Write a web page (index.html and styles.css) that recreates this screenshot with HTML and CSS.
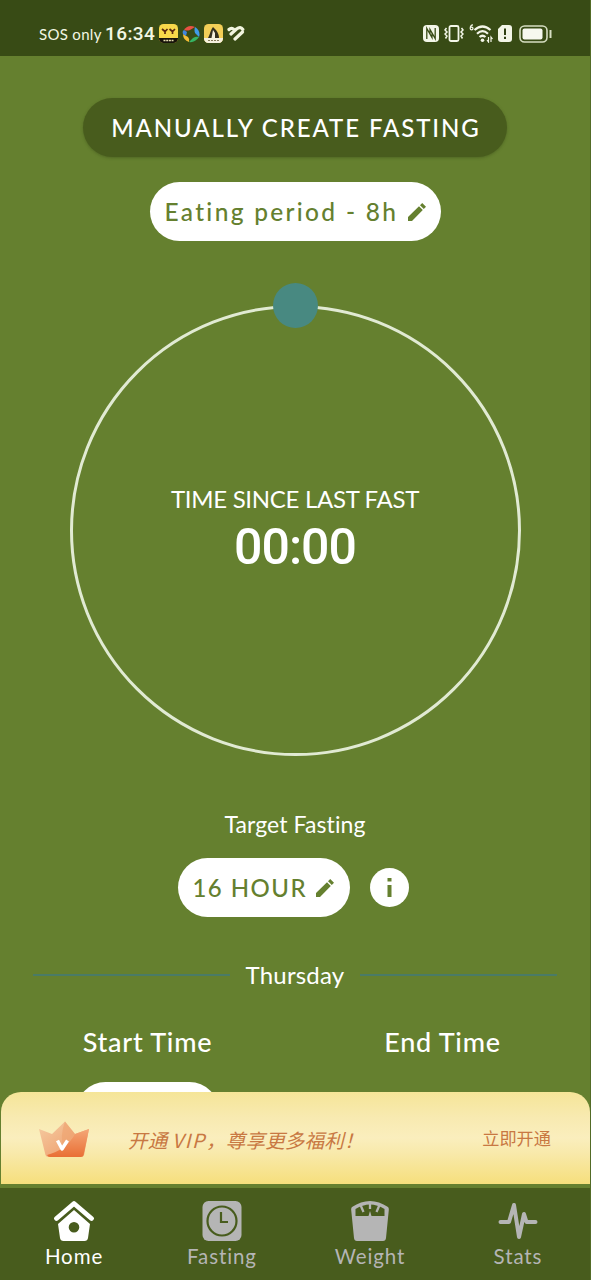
FILE: index.html
```html
<!DOCTYPE html>
<html lang="en">
<head>
<meta charset="utf-8">
<title>Fasting tracker</title>
<link rel="stylesheet" href="styles.css">
</head>
<body>
<div class="screen">
  <header class="status">
    <div class="status-left">
      <span class="carrier">SOS only</span>
      <span class="clock">16:34</span>
      <svg class="app" width="19" height="19" viewBox="0 0 19 19"><rect width="19" height="19" rx="4.5" fill="#f8d94a"/><path d="M0 14h19v.5a4.500 4.500 0 0 1-4.500 4.500h-10A4.500 4.500 0 0 1 0 14.500z" fill="#17130b"/><path d="M3 5l3 2.500L8.500 5M6 7.500V10M10.500 5l3 2.500L16 5M13.500 7.500V10" stroke="#5a2a10" stroke-width="1.700" fill="none"/><path d="M4.500 16.500h10" stroke="#e8dfb0" stroke-width="1.300" stroke-dasharray="2 .7"/></svg>
      <svg class="app" width="18" height="18" viewBox="0 0 18 18"><path d="M2 5Q6-1 13 2L8 5Q5 6 2 5z" fill="#e95143"/><path d="M13 2Q19 6 17 12L13 8Q12 5 13 2z" fill="#3f9be8"/><path d="M17 12Q13 18 7 17L11 13Q14 11 17 12z" fill="#36b563"/><path d="M7 17Q1 15 1 9L6 12Q8 14 7 17z" fill="#f4bd35"/><path d="M1 9Q0 6 2 5L5 7 4 11z" fill="#4286df"/></svg>
      <svg class="app" width="19" height="19" viewBox="0 0 19 19"><rect width="19" height="19" rx="4.500" fill="#f3cf57"/><path d="M4 14C6 11 6 7 9 3l3 3c2 3 3 5 3 8z" fill="#35301f"/><path d="M9 6l2 3v5H7.500z" fill="#f5efdc"/><path d="M0 14h19v.5a4.500 4.500 0 0 1-4.500 4.500h-10A4.500 4.500 0 0 1 0 14.500z" fill="#f5f1de"/><path d="M4 16.500h11" stroke="#857a5a" stroke-dasharray="2 1"/></svg>
      <svg width="18" height="16" viewBox="0 0 18 16" fill="none" stroke="#f1f5df" stroke-width="3.200" stroke-linecap="round"><path d="M2 3.500Q4 1.500 6.500 3M4 8L9.500 3Q13.500 0 15.800 3.500M8 13L15.500 6"/></svg>
    </div>
    <div class="status-right">
      <svg width="16" height="17" viewBox="0 0 16 17"><rect width="16" height="17" rx="4" fill="#f3f6e8"/><path d="M3.800 14V3.500L9 12.500V7.500M12.200 3v10.500L7 4.500v5" fill="none" stroke="#384b15" stroke-width="1.300"/></svg>
      <svg width="20" height="17" viewBox="0 0 20 17" fill="none" stroke="#f3f6e8"><rect x="5.500" y="1" width="9" height="15" rx="1.500" stroke-width="1.800"/><path d="M2.500 3L1 5l2 2-2 2 2 2-1.500 2.500M17.500 3L19 5l-2 2 2 2-2 2 1.500 2.500" stroke-width="1.500"/></svg>
      <svg width="24" height="19" viewBox="0 0 24 19" fill="none" stroke="#f3f6e8" stroke-width="2.200"><path d="M5.500 6Q13.500-1 21.500 6M8 9.700Q13.500 4.700 19 9.700M10.500 13Q13.500 10.500 16.500 13"/><circle cx="13.500" cy="16.300" r="1.800" fill="#f3f6e8" stroke="none"/><path d="M4 .8Q1.200 1 1.200 4.500a1.400 1.400 0 1 0 2.800 0a1.400 1.400 0 1 0-2.800 0" stroke-width="1.200"/><path d="M19.500 13v5l-1.500-2M22 18v-5l1.500 2" stroke-width="1.200"/></svg>
      <svg width="14" height="17" viewBox="0 0 14 17"><path d="M4 0h7a3 3 0 0 1 3 3v11a3 3 0 0 1-3 3H3a3 3 0 0 1-3-3V4z" fill="#f3f6e8"/><path d="M7 3.500v6.500M7 11.800V14" stroke="#2f4011" stroke-width="2"/></svg>
      <svg class="battery" width="33" height="18" viewBox="0 0 33 18"><rect x="1" y="1" width="27" height="16" rx="4.500" fill="none" stroke="#d6dec2" stroke-width="1.600"/><rect x="3.500" y="3.500" width="20" height="11" rx="2" fill="#f6f8ef"/><path d="M31.500 5v8" stroke="#d6dec2" stroke-width="2"/></svg>
    </div>
  </header>

  <main class="content">
    <button class="create"><span>MANUALLY CREATE FASTING</span></button>
    <button class="pill period"><span>Eating period - 8h</span>
      <svg class="pencil" width="18" height="18" viewBox="0 0 18 18" fill="currentColor"><path d="M0 14V18h4L14.800 7 11 3.200zM12 2.200L14.200 0 18 3.800 15.800 6z"/></svg>
    </button>
    <section class="dial">
      <span class="knob"></span>
      <div class="dial-label">TIME SINCE LAST FAST</div>
      <div class="dial-time">00:00</div>
    </section>
    <div class="target-label">Target Fasting</div>
    <div class="target-row">
      <button class="pill hours"><span>16 HOUR</span>
        <svg class="pencil" width="18" height="18" viewBox="0 0 18 18" fill="currentColor"><path d="M0 14V18h4L14.800 7 11 3.200zM12 2.200L14.200 0 18 3.800 15.800 6z"/></svg>
      </button>
      <svg class="info" width="39" height="39" viewBox="0 0 39 39"><circle cx="19.500" cy="19.500" r="19.500" fill="#fff"/><path d="M17.500 10h4v3.500h-4zM17.500 17h4v12h-4z" fill="#65802f"/></svg>
    </div>
    <div class="day"><i class="rule"></i><span>Thursday</span><i class="rule"></i></div>
    <div class="times">
      <div class="time-col"><span class="start">Start Time</span><div class="time-pill"></div></div>
      <div class="time-col"><span class="end">End Time</span></div>
    </div>
  </main>

  <aside class="vip">
    <svg width="52" height="36" viewBox="0 0 52 36"><defs><linearGradient id="crown" x1="0" y1="0" x2="1" y2="1"><stop offset="0" stop-color="#f5cda3"/><stop offset="1" stop-color="#ed9562"/></linearGradient><linearGradient id="fold" x1="0" y1="0" x2="0" y2="1"><stop offset="0" stop-color="#f4a777"/><stop offset="1" stop-color="#e96f35"/></linearGradient></defs><path d="M1 8l13 5L27 .5l10 12.500 14-5-5 26q-.5 2-3 2H11q-3 0-3.500-2z" fill="url(#crown)"/><path d="M51 8L37 13q-9 16-28 21 1 2 3 2h30.500q2.500 0 3-2z" fill="url(#fold)"/><path d="M27 .5l10 12.500q-5 8-12 13-3-12 2-25.500z" fill="#efa26e" opacity=".6"/><path d="M19.500 19.500l4.500 8.500 5.500-8.500" stroke="#fff" stroke-width="3.400" fill="none" stroke-linejoin="round"/></svg>
    <span class="vip-text">开通 <span class="vip-latin">VIP</span>，尊享更多福利！</span>
    <span class="vip-action">立即开通</span>
  </aside>

  <nav class="tabs">
    <a class="tab active">
      <svg width="40" height="40" viewBox="0 0 40 40"><path d="M2.500 17.500L20 2.500 37.500 17.500" fill="none" stroke="#fff" stroke-width="4.800" stroke-linecap="round" stroke-linejoin="round"/><path fill-rule="evenodd" d="M20 9L36 23l-2 14q-.5 3-3.500 3h-21q-3 0-3.500-3L4 23zM20 21a5.300 5.300 0 1 0 0 10.600A5.300 5.300 0 0 0 20 21z" fill="#fff"/></svg>
      <span class="t-home">Home</span></a>
    <a class="tab">
      <svg width="40" height="40" viewBox="0 0 40 40"><rect x=".5" width="39" height="40" rx="6" fill="#b5b5b5"/><circle cx="20" cy="20" r="14.500" fill="none" stroke="#485c1d" stroke-width="2.200"/><path d="M19 11v10h7" fill="none" stroke="#485c1d" stroke-width="2.200"/></svg>
      <span class="t-fast">Fasting</span></a>
    <a class="tab">
      <svg width="40" height="40" viewBox="0 0 40 40"><path d="M2 6Q20-6 38 6q1 1 .8 3L36 37q-.3 3-3 3H7q-2.700 0-3-3L1.200 9Q1 7 2 6z" fill="#b5b5b5"/><path d="M5.500 8Q20-1 34.500 8v7h-29z" fill="#485c1d"/><path d="M10.500 4l3 7M20 3v5M29.500 4l-3 7" stroke="#b5b5b5" stroke-width="2.300"/><path d="M18.200 16l1.800-6 1.800 6z" fill="#b5b5b5"/></svg>
      <span class="t-weight">Weight</span></a>
    <a class="tab">
      <svg width="40" height="40" viewBox="0 0 40 40"><path d="M2.500 21H11l5-17 5 32 5-23 2.500 8h9" fill="none" stroke="#b5b5b5" stroke-width="4" stroke-linecap="round" stroke-linejoin="round"/></svg>
      <span class="t-stats">Stats</span></a>
  </nav>
</div>
</body>
</html>
```
FILE: styles.css
```css
* { box-sizing: border-box; }
body { margin: 0; background: #65802f; color: #fff; font-family: Lato, "Noto Sans CJK SC", sans-serif; font-variant-ligatures: none; }
span { white-space: nowrap; }
svg { display: block; flex: none; }
button { border: 0; margin: 0; padding: 0; font: inherit; color: inherit; }
.screen { width: 591px; height: 1280px; display: flex; flex-direction: column; overflow: hidden; border-right: 1px solid #526b26; }

.status { height: 56px; flex: none; background: #384b15; display: flex; justify-content: space-between; padding: 11px 38px 0 39px; color: #f3f7e4; }
.status-left, .status-right { display: flex; align-items: center; height: 45px; }
.carrier { font-size: 15px; letter-spacing: .3px; width: 66px; }
.clock { font-family: Roboto, sans-serif; font-size: 19px; font-weight: 500; letter-spacing: .4px; width: 54px; }
.app { margin-right: 4px; }
.status-right { gap: 5px; }
.battery { margin-left: 2px; }

.content { height: 1036px; flex: none; display: flex; flex-direction: column; align-items: center; padding-top: 42px; overflow: hidden; }
.create { width: 424px; height: 59px; flex: none; border-radius: 30px; background: #485c1d; font-size: 24px; font-weight: 500; letter-spacing: 1.900px; padding-left: 2px; box-shadow: 0 1px 3px rgba(50,65,20,.4); }
.pill { height: 59px; flex: none; border-radius: 30px; background: #fff; color: #65802f; display: flex; align-items: center; font-size: 24px; font-weight: 500; padding-left: 15px; }
.period { width: 291px; margin-top: 25px; font-size: 24.500px; letter-spacing: 2.300px; }
.period .pencil { margin-left: auto; margin-right: 15px; }
.dial { position: relative; width: 451px; height: 451px; flex: none; margin-top: 64px; border: 3px solid #e1ead3; border-radius: 50%; display: flex; flex-direction: column; align-items: center; padding-top: 174px; }
.knob { position: absolute; top: -25px; left: 200px; width: 45px; height: 45px; border-radius: 50%; background: #488981; }
.dial-label { font-size: 24px; line-height: 34px; letter-spacing: -.3px; }
.dial-time { font-family: Roboto, sans-serif; font-size: 50px; line-height: 60px; font-weight: 500; letter-spacing: -1px; margin-top: 1px; }
.target-label { font-size: 23px; line-height: 30px; margin-top: 53px; letter-spacing: .1px; }
.target-row { display: flex; align-items: center; gap: 20px; margin-top: 19px; padding-right: 4px; }
.hours { width: 172px; letter-spacing: 1.450px; }
.hours .pencil { margin-left: auto; margin-right: 16px; }
.day { width: 524px; height: 30px; flex: none; display: flex; align-items: center; justify-content: space-between; margin-top: 43px; font-size: 24px; letter-spacing: .2px; }
.day span { margin-top: -2px; }
.rule { width: 197px; height: 2px; background: #4a7b66; }
.times { width: 590px; display: flex; margin-top: 35px; font-size: 27px; line-height: 34px; font-weight: 500; letter-spacing: .75px; }
.time-col { width: 295px; display: flex; flex-direction: column; align-items: center; }
.time-pill { width: 143px; height: 59px; margin-top: 23px; border-radius: 30px; background: #fff; }

.vip { height: 92px; margin: 0 0 4px 1px; flex: none; display: flex; align-items: center; padding: 2px 39px 0 37px; border-radius: 20px 20px 0 0; background: linear-gradient(#f5e598 0%, #f8eab1 28%, #faeebd 50%, #f8e9aa 67%, #f6df7c 100%); color: #c87842; font-family: "Noto Sans CJK SC", sans-serif; }
.vip-text { margin-left: 38px; margin-top: 1px; font-size: 19.500px; letter-spacing: .2px; font-style: italic; }
.vip-latin { letter-spacing: 1.600px; }
.vip-action { margin-left: auto; font-size: 17.200px; margin-top: -4px; }

.tabs { height: 92px; flex: none; display: flex; background: #485c1d; padding-top: 13px; }
.tab { width: 148px; flex: none; display: flex; flex-direction: column; align-items: center; color: #b5b5b5; font-size: 20.500px; line-height: 28px; letter-spacing: .9px; }
.active { color: #fff; }
.tab span { margin-top: 1px; }
```
